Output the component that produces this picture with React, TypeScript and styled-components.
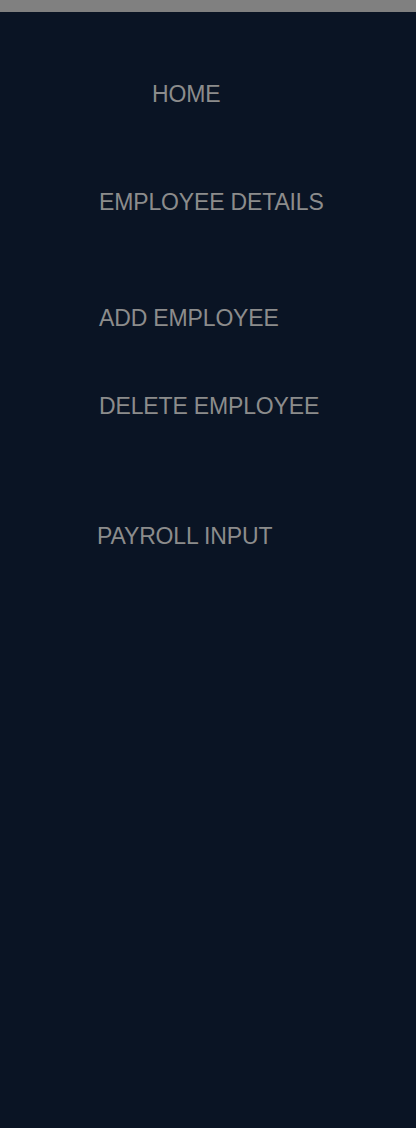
import styled, { createGlobalStyle } from "styled-components";

const GlobalStyle = createGlobalStyle`
  html, body {
    margin: 0;
    padding: 0;
    background: #0a1424;
  }
  body {
    font-family: "Liberation Sans", Arial, sans-serif;
  }
`;

interface NavItem {
  label: string;
  indent: number;
  gap: number;
}

const items: NavItem[] = [
  { label: "HOME", indent: 152, gap: 69 },
  { label: "EMPLOYEE DETAILS", indent: 99, gap: 82 },
  { label: "ADD EMPLOYEE", indent: 99, gap: 90 },
  { label: "DELETE EMPLOYEE", indent: 99, gap: 62 },
  { label: "PAYROLL INPUT", indent: 97, gap: 104 },
];

export default function App() {
  return (
    <>
      <GlobalStyle />
      <Page>
        <TopBar />
        <NavList>
          {items.map((item) => (
            <NavLink key={item.label} indent={item.indent} gap={item.gap}>
              {item.label}
            </NavLink>
          ))}
        </NavList>
      </Page>
    </>
  );
}

const Page = styled.div`
  display: flex;
  flex-direction: column;
  width: 416px;
  min-height: 1128px;
  background: #0a1424;
`;

const TopBar = styled.div`
  height: 12px;
  background: #808080;
`;

const NavList = styled.nav`
  display: flex;
  flex-direction: column;
`;

interface NavLinkProps {
  indent: number;
  gap: number;
}

const NavLink = styled.a<NavLinkProps>`
  display: block;
  margin-top: ${({ gap }) => gap}px;
  padding-left: ${({ indent }) => indent}px;
  color: #8c8c8c;
  font-size: 23px;
  line-height: 26px;
  letter-spacing: -0.15px;
  cursor: pointer;
`;
